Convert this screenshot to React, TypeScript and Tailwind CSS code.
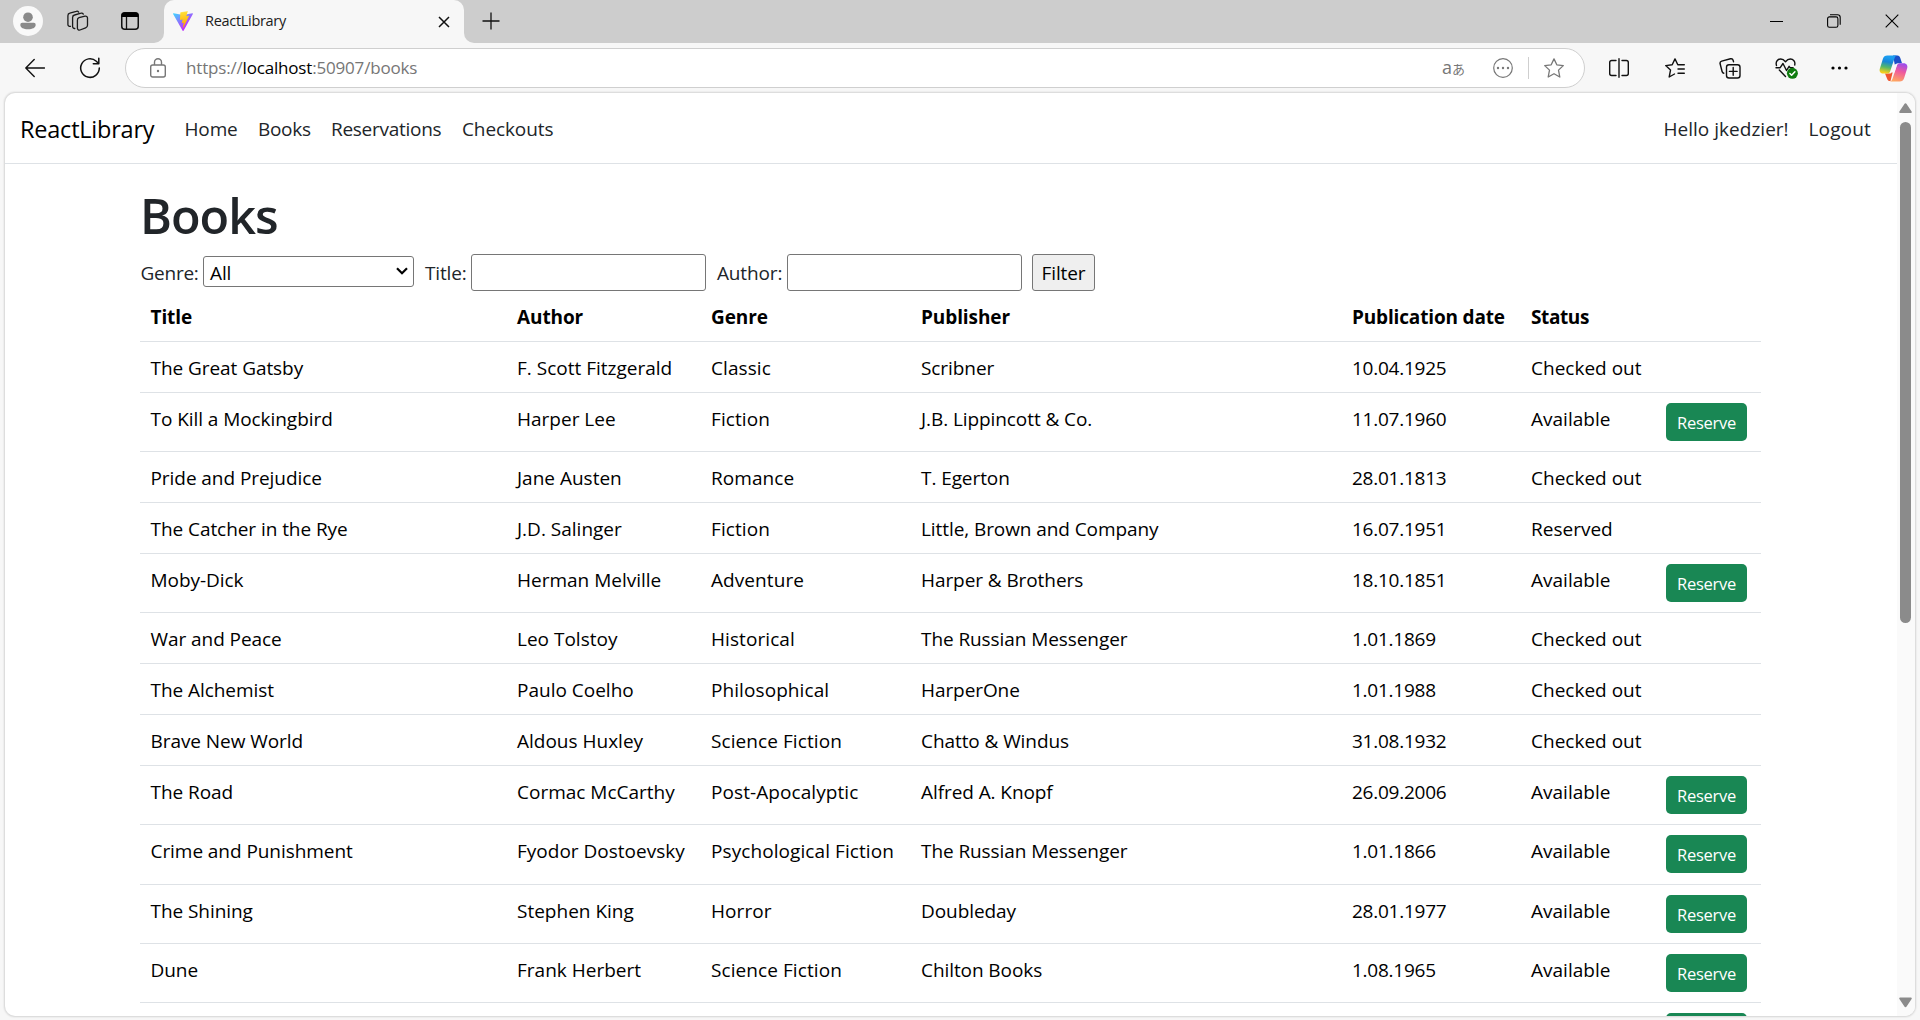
import React from 'react';

const COLS =
  'grid grid-cols-[367px_194px_210px_431px_179px_135px_105px] border-b border-[#dee2e6] text-black';
const CELL = 'pl-2.5 pt-[11px]';

type Status = 'Available' | 'Checked out' | 'Reserved';
type Book = [string, string, string, string, string, Status];

const books: Book[] = [
  ['The Great Gatsby', 'F. Scott Fitzgerald', 'Classic', 'Scribner', '10.04.1925', 'Checked out'],
  ['To Kill a Mockingbird', 'Harper Lee', 'Fiction', 'J.B. Lippincott & Co.', '11.07.1960', 'Available'],
  ['Pride and Prejudice', 'Jane Austen', 'Romance', 'T. Egerton', '28.01.1813', 'Checked out'],
  ['The Catcher in the Rye', 'J.D. Salinger', 'Fiction', 'Little, Brown and Company', '16.07.1951', 'Reserved'],
  ['Moby-Dick', 'Herman Melville', 'Adventure', 'Harper & Brothers', '18.10.1851', 'Available'],
  ['War and Peace', 'Leo Tolstoy', 'Historical', 'The Russian Messenger', '1.01.1869', 'Checked out'],
  ['The Alchemist', 'Paulo Coelho', 'Philosophical', 'HarperOne', '1.01.1988', 'Checked out'],
  ['Brave New World', 'Aldous Huxley', 'Science Fiction', 'Chatto & Windus', '31.08.1932', 'Checked out'],
  ['The Road', 'Cormac McCarthy', 'Post-Apocalyptic', 'Alfred A. Knopf', '26.09.2006', 'Available'],
  ['Crime and Punishment', 'Fyodor Dostoevsky', 'Psychological Fiction', 'The Russian Messenger', '1.01.1866', 'Available'],
  ['The Shining', 'Stephen King', 'Horror', 'Doubleday', '28.01.1977', 'Available'],
  ['Dune', 'Frank Herbert', 'Science Fiction', 'Chilton Books', '1.08.1965', 'Available'],
];

function ReserveButton() {
  return (
    <button className="block h-[38px] w-[81px] shrink-0 rounded-[5px] bg-[#198754] pt-px text-center text-[16.5px] leading-[37px] tracking-[-0.25px] text-white">
      Reserve
    </button>
  );
}

function BookRow({ book }: { book: Book }) {
  const [title, author, genre, publisher, date, status] = book;
  const available = status === 'Available';
  return (
    <div className={available ? `${COLS} h-[59.15px]` : `${COLS} h-[51px]`}>
      <div className="pl-[10.5px] pt-[11px] tracking-[-0.06px]">{title}</div>
      <div className={`${CELL} tracking-[0px]`}>{author}</div>
      <div className={`${CELL} tracking-[0.08px]`}>{genre}</div>
      <div className={`${CELL} tracking-[-0.08px]`}>{publisher}</div>
      <div className={`${CELL} tracking-[-0.25px]`}>{date}</div>
      <div className={`${CELL} tracking-[0.01px]`}>{status}</div>
      <div className="p-2.5">{available && <ReserveButton />}</div>
    </div>
  );
}

function ViteLogo() {
  return (
    <svg width="20" height="20" viewBox="0 0 256 257">
      <defs>
        <linearGradient id="viteA" x1="-.8%" x2="57.6%" y1="7.7%" y2="78.4%">
          <stop offset="0%" stopColor="#41D1FF" />
          <stop offset="100%" stopColor="#BD34FE" />
        </linearGradient>
        <linearGradient id="viteB" x1="43.4%" x2="50.3%" y1="2.2%" y2="89%">
          <stop offset="0%" stopColor="#FFEA83" />
          <stop offset="8.3%" stopColor="#FFDD35" />
          <stop offset="100%" stopColor="#FFA800" />
        </linearGradient>
      </defs>
      <path fill="url(#viteA)" d="M255.153 37.938L134.897 252.976c-2.483 4.44-8.862 4.466-11.382.048L.875 37.958c-2.746-4.814 1.371-10.646 6.827-9.67l120.385 21.517a6.537 6.537 0 0 0 2.322-.004l117.867-21.483c5.438-.991 9.574 4.796 6.877 9.62Z" />
      <path fill="url(#viteB)" d="M185.432.063L96.44 17.501a3.268 3.268 0 0 0-2.634 3.014l-5.474 92.456a3.268 3.268 0 0 0 3.997 3.378l24.777-5.718c2.318-.535 4.413 1.507 3.936 3.838l-7.361 36.047c-.495 2.426 1.782 4.5 4.151 3.78l15.304-4.649c2.372-.72 4.652 1.36 4.15 3.788l-11.698 56.621c-.732 3.542 3.979 5.473 5.943 2.437l1.313-2.028l72.516-144.72c1.215-2.423-.88-5.186-3.54-4.672l-25.505 4.922c-2.396.462-4.435-1.77-3.759-4.114l16.646-57.705c.677-2.35-1.37-4.583-3.769-4.113Z" />
    </svg>
  );
}

function TitleBar() {
  return (
    <div className="flex h-[43px] shrink-0 bg-[#cdcdcd]">
      <div className="flex w-[154px] items-center pb-px">
        <svg className="ml-[13px]" width="30" height="30" viewBox="0 0 30 30">
          <circle cx="15" cy="15" r="15" fill="#f9f9f9" />
          <circle cx="15" cy="11.2" r="4.8" fill="#8a8a8a" />
          <path d="M9.2 17.300h11.600a1.900 1.900 0 0 1 1.900 1.900c0 3-3.200 4.500-7.700 4.500s-7.700-1.500-7.700-4.500a1.900 1.900 0 0 1 1.900-1.900Z" fill="#8a8a8a" transform="translate(0 -.5)" />
        </svg>
        <svg className="ml-6" width="22" height="22" viewBox="0 0 22 22" fill="none" stroke="#1b1b1b" strokeWidth="1.300" strokeLinecap="round" strokeLinejoin="round">
          <path d="m12 7.700 6-1.600a2 2 0 0 1 2.500 2v7.200a2.600 2.600 0 0 1-1.900 2.500l-5.600 2.200a2 2 0 0 1-2.600-2v-7.800a2.500 2.500 0 0 1 1.600-2.500Z" />
          <path d="M7.800 18.500a2 2 0 0 1-2.200-2V7.500A2.500 2.500 0 0 1 7.500 5l6.500-1.800a2 2 0 0 1 2.300.9" />
          <path d="M3.500 16.300a2 2 0 0 1-2.600-1.900V5.700a2.500 2.500 0 0 1 1.900-2.500l6.500-1.900a2 2 0 0 1 2.300.8" />
        </svg>
        <svg className="ml-8" width="18" height="18" viewBox="0 0 18 18">
          <rect x=".75" y=".75" width="16.500" height="16.500" rx="3" fill="none" stroke="#111" strokeWidth="1.500" />
          <path d="M.5 5V3.500a3 3 0 0 1 3-3h11a3 3 0 0 1 3 3V5Z" fill="#000" />
          <path d="M5.500 5v12" stroke="#111" strokeWidth="1.300" />
        </svg>
      </div>
      <div className="flex h-[43px] w-[320px] items-stretch">
        <div className="flex w-2.5 bg-[#f7f7f7]"><div className="w-full rounded-br-[10px] bg-[#cdcdcd]" /></div>
        <div className="flex w-[300px] items-center rounded-t-[10px] bg-[#f7f7f7] pb-px pl-[9px]">
          <ViteLogo />
          <span className="-mt-px ml-3 flex-1 text-[14.500px] leading-5 tracking-[-0.3px] text-[#1b1b1b]">ReactLibrary</span>
          <svg className="mr-[14px] mt-px" width="12" height="12" viewBox="0 0 12 12" stroke="#111" strokeWidth="1.500">
            <path d="m1 1 10 10M11 1 1 11" />
          </svg>
        </div>
        <div className="flex w-2.5 bg-[#f7f7f7]"><div className="w-full rounded-bl-[10px] bg-[#cdcdcd]" /></div>
      </div>
      <div className="flex flex-1 items-center pb-px pl-[7.500px]">
        <svg width="18" height="18" viewBox="0 0 18 18" stroke="#111" strokeWidth="1.300">
          <path d="M9 .5v17M.5 9h17" />
        </svg>
      </div>
      <div className="flex items-center gap-11 pb-px pr-[21.5px]">
        <svg width="13" height="14" viewBox="0 0 13 14" stroke="#000"><path d="M0 7.500h13" /></svg>
        <svg width="14" height="14" viewBox="0 0 14 14" fill="none" stroke="#000" strokeWidth="1.100">
          <rect x=".6" y="2.900" width="10.300" height="10.300" rx="1.800" />
          <path d="M3 .8h7.500a2.700 2.700 0 0 1 2.700 2.700v7.200" />
        </svg>
        <svg width="14" height="14" viewBox="0 0 14 14" stroke="#000" strokeWidth="1.100"><path d="m.7.7 12.600 12.600M13.300.7.7 13.300" /></svg>
      </div>
    </div>
  );
}

function CopilotLogo() {
  return (
    <svg width="29" height="27" viewBox="0 0 29 27">
      <defs>
        <linearGradient id="cpA" x1=".5" y1="0" x2=".3" y2="1">
          <stop offset=".1" stopColor="#1b9df0" />
          <stop offset=".35" stopColor="#1786d8" />
          <stop offset=".65" stopColor="#55b868" />
          <stop offset=".95" stopColor="#f5cf1c" />
        </linearGradient>
        <linearGradient id="cpB" x1=".7" y1="0" x2=".4" y2="1">
          <stop offset="0" stopColor="#9b4dee" />
          <stop offset=".45" stopColor="#ef5a9d" />
          <stop offset="1" stopColor="#ffa660" />
        </linearGradient>
      </defs>
      <path d="M14 .5h4.500c1.500 0 2.300 1 2.800 2.600L23 8.200h-4c-1.800 0-2.500 1.200-3 2.800Z" fill="#1c4fc8" />
      <path d="M6 18.500h5.500L14 16l-2.500 10c-2.200 0-3-1-3.500-2.600Z" fill="#f0562f" />
      <path d="M8.300.5h10.200c-1.700 0-2.500 1.200-3 2.700l-4.300 13c-.5 1.500-1.500 2.400-3 2.400H4.300C1.600 18.600 0 16.500.8 13.700L4 3.500C4.700 1.500 6 .5 8.300.5Z" fill="url(#cpA)" />
      <path d="M20.700 26.500H10.500c1.700 0 2.500-1.200 3-2.700l4.300-13c.5-1.500 1.500-2.500 3-2.500h3.900c2.700 0 4.300 2.200 3.500 5L25 23.500c-.7 2-2 3-4.300 3Z" fill="url(#cpB)" />
      <path d="M15.600 9.300h2.600l-.8 2.300-1.900 5.800h-3.200l.4-1.300Z" fill="#fbf6fb" />
    </svg>
  );
}

const SLOT = 'flex w-[55px] items-center justify-center';

function Toolbar() {
  return (
    <div className="flex h-[50px] shrink-0 items-center bg-[#f7f7f7]">
      <div className="flex w-[125px] items-center">
        <svg className="ml-[25px] -mt-px" width="20" height="20" viewBox="0 0 20 20" fill="none" stroke="#111" strokeWidth="1.400" strokeLinecap="round" strokeLinejoin="round">
          <path d="M19.500 10H.8M9.200 1.500.8 10l8.400 8.500" />
        </svg>
        <svg className="ml-[34px]" width="22" height="22" viewBox="0 0 22 22" fill="none" stroke="#111" strokeWidth="1.500" strokeLinecap="round" strokeLinejoin="round">
          <path d="M20.300 11a9.300 9.300 0 1 1-3-6.800l2 2" />
          <path d="M19.800 1.300v5.400h-5.500" />
        </svg>
      </div>
      <div className="flex h-10 w-[1460px] items-center rounded-full border border-[#cfcfcf] bg-white">
        <svg className="ml-6 -mt-px" width="16" height="20" viewBox="0 0 16 20" fill="none" stroke="#777" strokeWidth="1.400">
          <rect x=".7" y="7" width="14.600" height="12" rx="2" />
          <path d="M4.500 7V4.300a3.500 3.500 0 0 1 7 0V7" />
          <circle cx="8" cy="13" r="1.200" fill="#777" stroke="none" />
        </svg>
        <div className="ml-5 flex-1 whitespace-nowrap text-[17px] leading-6 tracking-[-0.18px] text-[#767676]">
          https://<span className="text-black">localhost</span>:50907/books
        </div>
        <span className="-ml-1 w-[22px] whitespace-nowrap font-['Open_Sans','Noto_Sans_CJK_JP',sans-serif] text-[18px] leading-5 tracking-[0px] text-[#777]">
          a<span className="text-[13px]">あ</span>
        </span>
        <svg className="ml-[29px]" width="20" height="20" viewBox="0 0 20 20" fill="none" stroke="#777" strokeWidth="1.200">
          <circle cx="10" cy="10" r="9.300" />
          <g fill="#777" stroke="none"><circle cx="5" cy="10" r="1.200" /><circle cx="10" cy="10" r="1.200" /><circle cx="15" cy="10" r="1.200" /></g>
        </svg>
        <div className="ml-[15px] h-[22px] w-px bg-[#cfcfcf]" />
        <svg className="ml-[15px] mr-5" width="20" height="20" viewBox="0 0 20 20" fill="none" stroke="#777" strokeWidth="1.300" strokeLinejoin="round">
          <path d="m10 .9 2.800 5.900 6.500.8-4.800 4.500 1.300 6.900L10 15.700 4.200 19l1.300-6.900L.7 7.600l6.500-.8Z" />
        </svg>
      </div>
      <div className="ml-[7px] flex">
        <div className={SLOT}>
          <svg className="-ml-px" width="20" height="20" viewBox="0 0 20 20" fill="none" stroke="#111" strokeWidth="1.400" strokeLinecap="round">
            <path d="M10 .7v18.600M7 2.500H2.700a2 2 0 0 0-2 2v11a2 2 0 0 0 2 2H7M13 2.500h4.300a2 2 0 0 1 2 2v11a2 2 0 0 1-2 2H13" />
          </svg>
        </div>
        <div className={SLOT}>
          <svg className="ml-px" width="20" height="20" viewBox="0 0 20 20" fill="none" stroke="#111" strokeWidth="1.400" strokeLinecap="round" strokeLinejoin="round">
            <path d="M19.300 6.700h-6.500L10 .9 7.200 6.800l-6.500.8 4.800 4.500L4.200 19l5.300-3M13 11h6.300M13 15.200h6.300" />
          </svg>
        </div>
        <div className={SLOT}>
          <svg width="22" height="21" viewBox="0 0 22 21" fill="none" stroke="#111" strokeWidth="1.400" strokeLinecap="round" strokeLinejoin="round">
            <rect x="7.500" y="6.700" width="13.500" height="13.300" rx="2.500" />
            <path d="M14.200 9.500v7.700M10.400 13.400h7.700M4.800 15.200a2.300 2.300 0 0 1-1.700-1.700L1.100 5.800a2.300 2.300 0 0 1 1.600-2.700L11.500.8a2.300 2.300 0 0 1 2.700 1.700l.3 1.200" />
          </svg>
        </div>
        <div className={SLOT}>
          <svg className="ml-[3px]" width="23" height="21" viewBox="0 0 23 21" fill="none" stroke="#111" strokeWidth="1.400" strokeLinecap="round" strokeLinejoin="round">
            <path d="M1.500 7.500C.2 3.500 3 1 5.700 1c2 0 3.400 1 4.800 2.700C11.900 2 13.300 1 15.300 1c2.900 0 5.300 2.600 4.400 6M4.300 12l6.200 6.500" />
            <path d="M1 9.700h4.200L8 5.500l3.500 7 2.600-4.200 1 1.400h3" />
            <circle cx="17.400" cy="15.300" r="5.500" fill="#107c10" stroke="none" />
            <path d="m14.900 15.500 1.700 1.700 3.300-3.500" stroke="#fff" strokeWidth="1.500" />
          </svg>
        </div>
        <div className={SLOT}>
          <svg width="17" height="4" viewBox="0 0 17 4"><circle cx="2" cy="2" r="1.600" /><circle cx="8.500" cy="2" r="1.600" /><circle cx="15" cy="2" r="1.600" /></svg>
        </div>
        <div className="flex w-[52px] items-center justify-center"><CopilotLogo /></div>
      </div>
    </div>
  );
}

function Navbar() {
  return (
    <nav className="flex h-[71px] shrink-0 items-center border-b border-[#dee2e6] pl-[15px] pt-[2px] text-[#212529]">
      <span className="w-[164.5px] text-[23.500px] tracking-[-0.22px] text-black">ReactLibrary</span>
      <span className="w-[73.5px] tracking-[-0.15px]">Home</span>
      <span className="w-[73px] tracking-[-0.3px]">Books</span>
      <span className="w-[131px] tracking-[-0.28px]">Reservations</span>
      <span className="tracking-[-0.1px]">Checkouts</span>
      <span className="ml-auto w-[145px] tracking-[0.02px]">Hello jkedzier!</span>
      <span className="w-[88.5px] tracking-[0.15px]">Logout</span>
    </nav>
  );
}

function Filters() {
  return (
    <div className="flex h-[37px] items-center text-[#212529]">
      <label className="w-[63px] pl-[0.5px] pt-px tracking-[-0.25px]">Genre:</label>
      <div className="-mt-[3px] flex h-[31px] w-[211px] items-center justify-between rounded-[3px] border border-[#767676] px-[5px] text-black">
        <span className="pl-px pt-[3px]">All</span>
        <svg width="12" height="8" viewBox="0 0 12 8" fill="none" stroke="#000" strokeWidth="2.200"><path d="m1 1.200 5 5 5-5" /></svg>
      </div>
      <label className="ml-[11px] w-[46px] pt-px tracking-[-0.15px]">Title:</label>
      <input className="h-[37px] w-[235px] rounded-[3px] border border-[#767676] bg-white" />
      <label className="ml-[11px] w-[70px] pt-px tracking-[-0.15px]">Author:</label>
      <input className="h-[37px] w-[235px] rounded-[3px] border border-[#767676] bg-white" />
      <button className="ml-2.5 h-[37px] w-[63px] rounded-[3px] border border-[#767676] bg-[#efefef] pt-px text-center text-black">Filter</button>
    </div>
  );
}

function Scrollbar() {
  return (
    <div className="flex w-[18px] shrink-0 flex-col items-center bg-[#fafafa] pr-px">
      <svg className="mt-2.5" width="13" height="11" viewBox="0 0 13 11" fill="#8b8b8b">
        <path d="M5.400.9a1.300 1.300 0 0 1 2.200 0l5 7.600c.5.800.1 1.500-.8 1.500H1.200c-.9 0-1.300-.7-.8-1.500Z" />
      </svg>
      <div className="mt-2 h-[501px] w-[11px] rounded-full bg-[#8b8b8b]" />
      <svg className="mb-2 mt-auto" width="13" height="11" viewBox="0 0 13 11" fill="#8b8b8b">
        <path d="M5.400 9.600a1.300 1.300 0 0 0 2.200 0l5-7.600c.5-.8.1-1.500-.8-1.500H1.200C.3.500-.1 1.200.4 2Z" />
      </svg>
    </div>
  );
}

export default function App() {
  return (
    <div className="flex h-[1020px] w-[1920px] flex-col overflow-hidden bg-[#f7f7f7] font-['Open_Sans','Noto_Sans',sans-serif] text-[19px] leading-[30px] tracking-[-0.1px]">
      <TitleBar />
      <Toolbar />
      <div className="mx-[5px] flex h-[923px] shrink-0 overflow-hidden rounded-[10px] bg-white shadow-[0_0_2px_1px_rgba(0,0,0,0.14)]">
        <div className="flex min-w-0 flex-1 flex-col">
          <Navbar />
          <main className="ml-[135px] mt-5 w-[1621px] shrink-0">
            <h1 className="mb-2.5 h-[60px] pt-px text-[48.500px] font-semibold leading-[60px] tracking-[-1px] text-[#212529]">Books</h1>
            <Filters />
            <div className={`${COLS} h-[51px] font-bold`}>
              <div className="pl-[10.5px] pt-[11px]">Title</div>
              <div className={CELL}>Author</div>
              <div className={CELL}>Genre</div>
              <div className={CELL}>Publisher</div>
              <div className={`${CELL} whitespace-nowrap tracking-[-0.16px]`}>Publication date</div>
              <div className={`${CELL} tracking-[-0.4px]`}>Status</div>
              <div />
            </div>
            {books.map((b) => (
              <BookRow key={b[0]} book={b} />
            ))}
            <div className="flex justify-end p-2.5 pr-[14px]"><ReserveButton /></div>
          </main>
        </div>
        <Scrollbar />
      </div>
    </div>
  );
}
